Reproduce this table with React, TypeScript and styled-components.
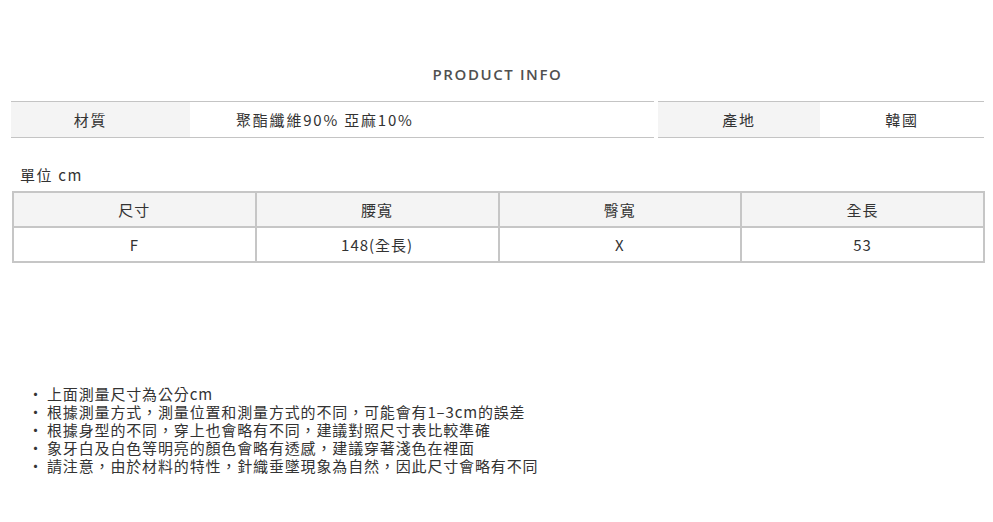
import styled, { createGlobalStyle } from "styled-components";

const GlobalStyle = createGlobalStyle`
    body {
        margin: 0;
        background: #ffffff;
        font-family: "Noto Sans CJK TC", "Noto Sans", sans-serif;
        color: #333333;
    }
`

const sizeHead = ["尺寸", "腰寬", "臀寬", "全長"]
const sizeRows = [["F", "148(全長)", "X", "53"]]

const notes = [
    "上面測量尺寸為公分cm",
    "根據測量方式，測量位置和測量方式的不同，可能會有1–3cm的誤差",
    "根據身型的不同，穿上也會略有不同，建議對照尺寸表比較準確",
    "象牙白及白色等明亮的顏色會略有透感，建議穿著淺色在裡面",
    "請注意，由於材料的特性，針織垂墜現象為自然，因此尺寸會略有不同",
]

export default function App() {
    return (
        <>
            <GlobalStyle />
            <Page>
                <Title>PRODUCT INFO</Title>
                <InfoTable>
                    <InfoGroup $width={643}>
                        <LabelCell $width={179} $shift={20}>材質</LabelCell>
                        <ValueCell $align="left">聚酯纖維90% 亞麻10%</ValueCell>
                    </InfoGroup>
                    <InfoGroup $width={326}>
                        <LabelCell $width={162} $shift={0}>產地</LabelCell>
                        <ValueCell $align="center">韓國</ValueCell>
                    </InfoGroup>
                </InfoTable>
                <UnitText>單位 cm</UnitText>
                <SizeTable>
                    <thead>
                        <tr>
                            {sizeHead.map((h) => (
                                <HeadCell key={h}>{h}</HeadCell>
                            ))}
                        </tr>
                    </thead>
                    <tbody>
                        {sizeRows.map((row, i) => (
                            <tr key={i}>
                                {row.map((v, j) => (
                                    <BodyCell key={j}>{v}</BodyCell>
                                ))}
                            </tr>
                        ))}
                    </tbody>
                </SizeTable>
                <NoteList>
                    {notes.map((n) => (
                        <NoteItem key={n}>{n}</NoteItem>
                    ))}
                </NoteList>
            </Page>
        </>
    )
}

const Page = styled.div`
    width: 993px;
    height: 522px;
    padding: 64px 9px 0 11px;
    box-sizing: border-box;
`

const Title = styled.h2`
    margin: 0;
    text-align: center;
    font-family: "Open Sans", "Noto Sans", sans-serif;
    font-weight: 600;
    font-size: 15px;
    line-height: 20px;
    letter-spacing: 1.6px;
    color: #505050;
`

const InfoTable = styled.div`
    display: flex;
    gap: 4px;
    margin-top: 17px;
    height: 37px;
`

const InfoGroup = styled.div<{ $width: number }>`
    display: flex;
    width: ${(p) => p.$width}px;
    border-top: 1px solid #c4c4c4;
    border-bottom: 1px solid #c4c4c4;
    font-size: 15px;
    letter-spacing: 1.8px;
`

const LabelCell = styled.div<{ $width: number; $shift: number }>`
    display: flex;
    align-items: center;
    justify-content: center;
    width: ${(p) => p.$width}px;
    padding-right: ${(p) => p.$shift}px;
    box-sizing: border-box;
    background: #f4f4f4;
    color: #333333;
`

const ValueCell = styled.div<{ $align: "left" | "center" }>`
    flex: 1;
    display: flex;
    align-items: center;
    justify-content: ${(p) => (p.$align === "left" ? "flex-start" : "center")};
    padding-left: ${(p) => (p.$align === "left" ? "46px" : "0")};
    color: #333333;
`

const UnitText = styled.div`
    margin: 27px 0 0 9px;
    font-size: 15px;
    line-height: 20px;
    letter-spacing: 1.6px;
    color: #333333;
`

const SizeTable = styled.table`
    margin: 6px 0 0 1px;
    width: 973px;
    border-collapse: collapse;
    table-layout: fixed;
    font-size: 15px;
    letter-spacing: 1px;
    color: #333333;
    td, th {
        border: 2px solid #c6c6c6;
        text-align: center;
        height: 33px;
        padding: 0;
    }
`

const HeadCell = styled.th`
    background: #f4f4f4;
    font-weight: 400;
`

const BodyCell = styled.td`
    background: #ffffff;
`

const NoteList = styled.ul`
    list-style: none;
    margin: 122px 0 0 0;
    padding: 0 0 0 17px;
    font-size: 15px;
    line-height: 18px;
    letter-spacing: 0.85px;
    color: #333333;
`

const NoteItem = styled.li`
    display: flex;
    &::before {
        content: "・";
        width: 19px;
        flex-shrink: 0;
        letter-spacing: 0;
    }
`
